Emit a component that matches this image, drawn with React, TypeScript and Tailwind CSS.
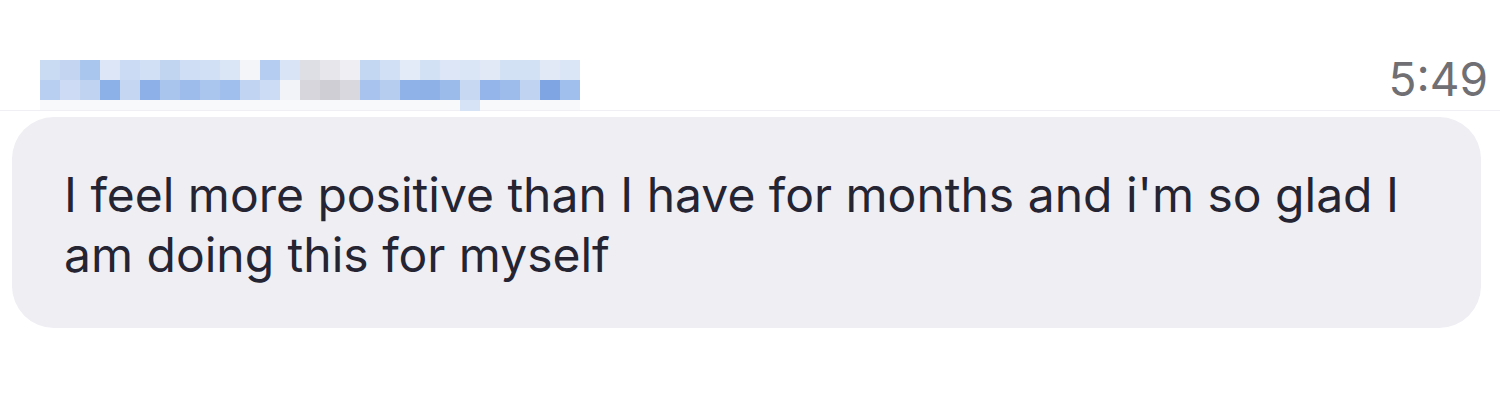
const topRow = [
  "bg-[#c9daf3]", "bg-[#c3d5f1]", "bg-[#a9c6ef]", "bg-[#dce6f7]", "bg-[#cbdbf3]", "bg-[#d1e0f5]",
  "bg-[#c1d5f1]", "bg-[#cfdef4]", "bg-[#d2e0f5]", "bg-[#dae5f6]", "bg-[#f4f5f9]", "bg-[#b5cdf1]",
  "bg-[#d9e5f6]", "bg-[#dedfe4]", "bg-[#e7e6ea]", "bg-[#efeef2]", "bg-[#c4d7f2]", "bg-[#d1e0f5]",
  "bg-[#e3ebf8]", "bg-[#d3e1f5]", "bg-[#dce6f6]", "bg-[#dae5f6]", "bg-[#e1e9f7]", "bg-[#d3e1f5]",
  "bg-[#d3e1f5]", "bg-[#e1e9f7]", "bg-[#dae5f6]",
];

const bottomRow = [
  "bg-[#b8cff1]", "bg-[#cddcf4]", "bg-[#c0d4f2]", "bg-[#8cb0e8]", "bg-[#c4d6f2]", "bg-[#8db0e9]",
  "bg-[#a9c5ee]", "bg-[#9dbcec]", "bg-[#aac5ee]", "bg-[#a1bfec]", "bg-[#c1d5f2]", "bg-[#ccdcf4]",
  "bg-[#f2f3f8]", "bg-[#d6d6dc]", "bg-[#cfced5]", "bg-[#d8d8de]", "bg-[#a8c4ee]", "bg-[#b7cdf0]",
  "bg-[#8fb2e9]", "bg-[#8eb1e8]", "bg-[#9bbbeb]", "bg-[#c7d8f3]", "bg-[#94b5ea]", "bg-[#9dbceb]",
  "bg-[#c0d4f2]", "bg-[#7fa6e3]", "bg-[#a1bfec]",
];

// the sender's name is pixelated in the screenshot
function BlurredName() {
  return (
    <div className="grid grid-cols-[repeat(27,20px)]">
      {topRow.map((c, i) => (
        <div key={"t" + i} className={`h-[20px] ${c}`} />
      ))}
      {bottomRow.map((c, i) => (
        <div key={"b" + i} className={`h-[20px] ${c}`} />
      ))}
      {topRow.map((_, i) => (
        <div key={"f" + i} className={i === 21 ? "h-[11px] bg-[#d6e3f6]" : "h-[10px] bg-[#f8f9fb]"} />
      ))}
    </div>
  );
}

export default function App() {
  return (
    <div className="h-[400px] w-[1500px] bg-white pt-[60px] font-['Inter','Noto_Sans',sans-serif]">
      <div className="flex h-[50px] items-start justify-between pl-[40px] pr-[12px]">
        <BlurredName />
        <span className="-mt-[4px] text-[46px] leading-none text-[#6f6f74]">5:49</span>
      </div>
      <div className="h-px bg-[#f0f0f4]" />
      <div className="px-[12px] pt-[6px]">
        <div className="h-[211px] w-[1469px] rounded-[42px] bg-[#eeeef3] pl-[52px] pt-[48px]">
          <p className="text-[48px] leading-[60px] text-[#242433]">
            I feel more positive than I have for months and i'm so glad I
            <br />
            am doing this for myself
          </p>
        </div>
      </div>
    </div>
  );
}
